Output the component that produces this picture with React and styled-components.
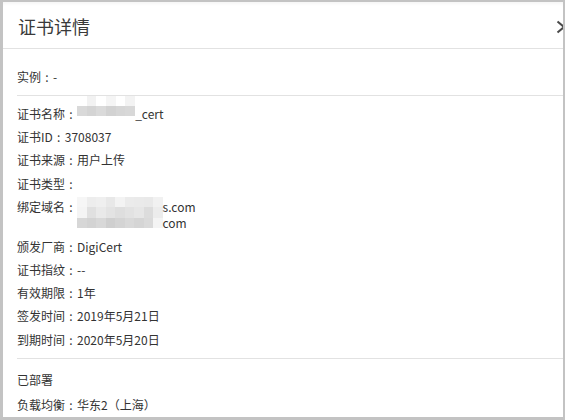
import React from 'react';
import styled, { createGlobalStyle } from 'styled-components';

const GlobalStyle = createGlobalStyle`
  html, body {
    margin: 0;
    padding: 0;
    background: #c3c3c3;
  }
  body {
    font-family: 'Noto Sans CJK SC', 'Microsoft YaHei', sans-serif;
    color: #333;
  }
`;

const Panel = styled.div`
  margin: 2px 3px 0 3px;
  width: 560px;
  height: 415px;
  background: #fff;
  overflow: hidden;
  box-shadow: inset 0 4px 4px -3px rgba(0, 0, 0, 0.06);
`;

const Header = styled.div`
  display: flex;
  align-items: center;
  justify-content: space-between;
  height: 47px;
  padding: 0 0 0 15px;
  border-bottom: 1px solid #e2e2e2;
  box-sizing: border-box;

  h2 {
    margin: 2px 0 0;
    font-size: 18px;
    font-weight: 400;
    color: #3a3a3a;
  }

  svg {
    margin-right: -4px;
    margin-top: 3px;
  }
`;

const Section = styled.div`
  margin-left: 14px;
  padding: ${(p) => p.pad || '10px 0'};
  border-bottom: ${(p) => (p.last ? 'none' : '1px solid #e2e2e2')};
`;

const Row = styled.div`
  display: flex;
  font-size: 12px;
  line-height: 16px;
  margin-bottom: ${(p) => p.gap ?? 7.2}px;
  &:last-child {
    margin-bottom: 0;
  }
`;

const Colon = styled.span`
  display: inline-block;
  width: 12px;
  text-align: center;
  flex-shrink: 0;
`;

const Lines = styled.div`
  display: flex;
  flex-direction: column;
`;

const Mosaic = styled.div`
  display: grid;
  grid-template-columns: repeat(${(p) => p.cols}, ${(p) => p.cw}px);
  grid-auto-rows: ${(p) => p.ch}px;
  margin-top: ${(p) => p.top || 0}px;
  flex-shrink: 0;
`;

const Cell = styled.span`
  display: block;
  background: ${(p) => p.c};
`;

const nameCells = [
  '#ffffff', '#f2f2f2', '#ffffff', '#f5f5f5', '#ffffff', '#f3f3f3',
  '#d9d9d9', '#d4d4d4', '#dadada', '#d2d2d2', '#d6d6d6', '#d8d8d8',
];

const domainCells = [
  '#f6f6f6', '#ededed', '#efefef', '#e8e8e8', '#f3f3f3', '#ebebeb', '#eaeaea', '#e9e9e9', '#f1f1f1',
  '#f4f4f4', '#e0e0e0', '#e9e9e9', '#e3e3e3', '#dedede', '#e2e2e2', '#e6e6e6', '#dcdcdc', '#ececec',
  '#d7d7d7', '#d3d3d3', '#d8d8d8', '#cfcfcf', '#d4d4d4', '#d9d9d9', '#d5d5d5', '#dadada', '#f4f4f4',
];

function Blur({ cells, cols, cw, ch, top }) {
  return (
    <Mosaic cols={cols} cw={cw} ch={ch} top={top}>
      {cells.map((c, i) => (
        <Cell key={i} c={c} />
      ))}
    </Mosaic>
  );
}

function Field({ label, children, gap }) {
  return (
    <Row gap={gap}>
      {label}
      <Colon>:</Colon>
      {children}
    </Row>
  );
}

const Chevron = () => (
  <svg width="12" height="14" viewBox="0 0 12 14">
    <path d="M2.5 1.5 L9 7 L2.5 12.5" fill="none" stroke="#4a4a4a" strokeWidth="2" />
  </svg>
);

export default function App() {
  return (
    <>
      <GlobalStyle />
      <Panel>
        <Header>
          <h2>证书详情</h2>
          <Chevron />
        </Header>
        <Section pad="20px 0 10px">
          <Field label="实例">-</Field>
        </Section>
        <Section pad="10px 0 10px">
          <Field label="证书名称">
            <Blur cells={nameCells} cols={6} cw={9.7} ch={10} top={-10} />
            _cert
          </Field>
          <Field label="证书ID">3708037</Field>
          <Field label="证书来源">用户上传</Field>
          <Field label="证书类型" />
          <Field label="绑定域名" gap={8}>
            <Blur cells={domainCells} cols={9} cw={9.5} ch={10.5} top={-2} />
            <Lines>
              <span>s.com</span>
              <span>com</span>
            </Lines>
          </Field>
          <Field label="颁发厂商">DigiCert</Field>
          <Field label="证书指纹">--</Field>
          <Field label="有效期限">1年</Field>
          <Field label="签发时间">2019年5月21日</Field>
          <Field label="到期时间">2020年5月20日</Field>
        </Section>
        <Section pad="13px 0 0" last>
          <Row gap={9}>已部署</Row>
          <Field label="负载均衡">华东2（上海）</Field>
        </Section>
      </Panel>
    </>
  );
}
